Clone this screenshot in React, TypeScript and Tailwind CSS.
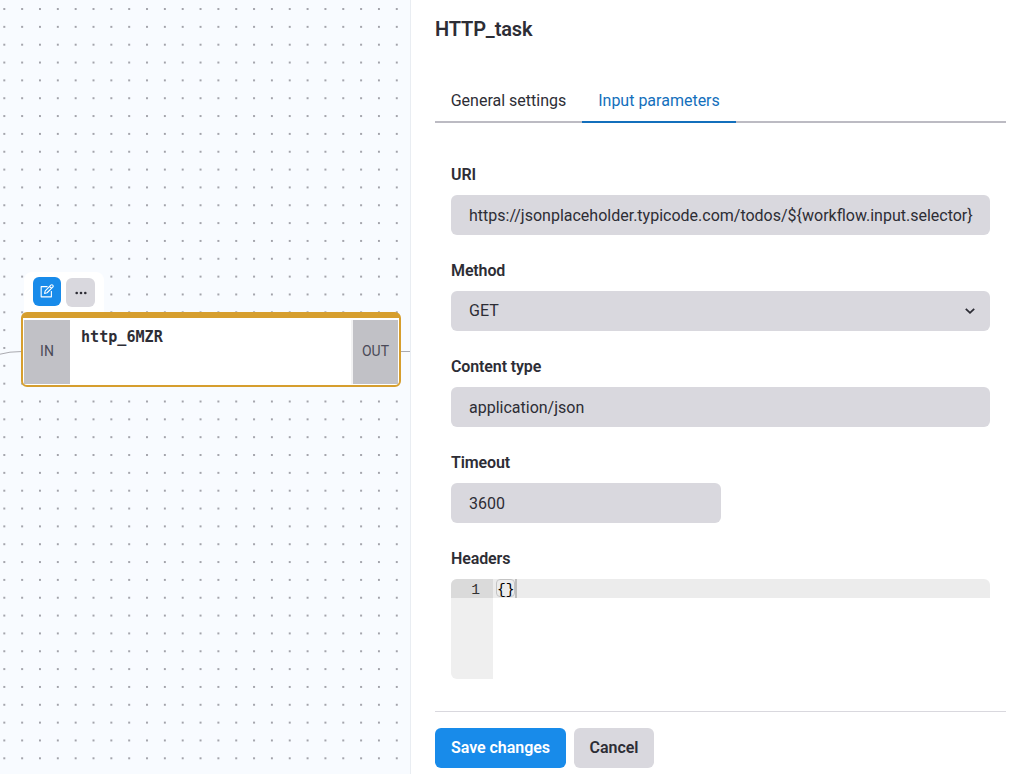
import type { ReactNode } from 'react';

function Field({ label, children }: { label: string; children: ReactNode }) {
  return (
    <div className="flex flex-col gap-2">
      <label className="block h-6 text-base leading-6 font-semibold tracking-[-0.12px]">{label}</label>
      {children}
    </div>
  );
}

function EditIcon() {
  return (
    <svg className="mb-px size-3.5" viewBox="0 0 24 24" fill="none" stroke="white" strokeWidth="1.9" strokeLinejoin="round">
      <path d="M13 4.5H2v17.5h17.5V12" />
      <path d="M18.6 2.1a2.1 2.1 0 0 1 3.2 3.2L12.2 15l-4.4 1.2L9 11.8ZM16.6 4.4l3 3" />
    </svg>
  );
}

function Canvas() {
  return (
    <main className="relative h-full w-[411px] shrink-0 overflow-hidden border-r border-[#e9edf2] bg-[#f8fbff]">
      <svg className="absolute inset-0 size-full">
        <defs>
          <pattern id="dots" x="-4.6" y="0.1" width="17.84" height="17.84" patternUnits="userSpaceOnUse">
            <circle cx="8.92" cy="8.92" r="0.95" fill="#81818a" />
          </pattern>
        </defs>
        <rect width="100%" height="100%" fill="url(#dots)" />
        <path d="M0 354.2Q9 351.5 22 351.5M401 351.5H411" fill="none" stroke="#aaaab0" />
      </svg>
      <div className="absolute top-[272px] left-6 flex h-10 w-20 gap-[5px] rounded-t-lg bg-white pt-[5px] pl-[9px]">
        <button className="flex h-[29px] w-7 items-center justify-center rounded-md bg-[#188bea]">
          <EditIcon />
        </button>
        <button className="mt-px flex h-[29px] w-[29px] items-center justify-center rounded-md bg-[#d9d8de]">
          <svg className="size-3" viewBox="0 0 12 12" fill="#2d2d35">
            <circle cx="1.7" cy="6" r="1.3" /><circle cx="6" cy="6" r="1.3" /><circle cx="10.3" cy="6" r="1.3" />
          </svg>
        </button>
      </div>
      <section className="absolute top-[312px] left-[21px] flex h-[75px] w-[380px] rounded-md border-2 border-t-[6px] border-[#d69e2e] bg-white px-px pt-[2px] pb-px text-[#4a4a57]">
        <div className="flex w-[46px] items-center justify-center bg-[#c1c1c6] pb-[2px] text-sm">IN</div>
        <div className="flex-1 border-r-2 border-[#f2f2f3] pt-[7px] pl-[11px] font-['DejaVu_Sans_Mono',monospace] text-[15.1px] leading-5 font-bold text-[#2d2d35]">http_6MZR</div>
        <div className="flex w-[45px] items-center justify-center bg-[#c1c1c6] pb-[2px] text-sm">OUT</div>
      </section>
    </main>
  );
}

export default function App() {
  return (
    <div className="flex h-[774px] w-[1024px] overflow-hidden bg-white font-[Roboto,sans-serif] text-base text-[#2d2d35]">
      <Canvas />
      <aside className="flex w-[613px] flex-col pr-[18px] pl-6">
        <h1 className="mt-[14px] h-[30px] text-xl leading-[30px] font-semibold tracking-[-0.15px]">HTTP_task</h1>
        <nav className="mt-9 flex h-[43px] border-b-2 border-[#bcbbc3]">
          <button className="h-[41px] w-[147px] text-center leading-10">General settings</button>
          <button className="h-[43px] w-[154px] border-b-2 border-[#136fbc] text-center leading-10 text-[#136fbc]">Input parameters</button>
        </nav>
        <form className="mt-10 flex h-[548px] flex-col gap-6 px-4">
          <Field label="URI">
            <div className="h-10 rounded-md bg-[#d9d8de] px-[18px] leading-[42px]">{'https://jsonplaceholder.typicode.com/todos/${workflow.input.selector}'}</div>
          </Field>
          <Field label="Method">
            <div className="flex h-10 items-center justify-between rounded-md bg-[#d9d8de] pr-[15px] pl-[18px] leading-10">
              GET
              <svg className="size-[10px]" viewBox="0 0 10 10" fill="none" stroke="#2d2d35" strokeWidth="1.8"><path d="m.8 2.8 4.2 4 4.2-4" /></svg>
            </div>
          </Field>
          <Field label="Content type">
            <div className="h-10 rounded-md bg-[#d9d8de] px-[18px] leading-[42px]">application/json</div>
          </Field>
          <Field label="Timeout">
            <div className="h-10 w-[270px] rounded-md bg-[#d9d8de] px-[18px] leading-[42px]">3600</div>
          </Field>
          <Field label="Headers">
            <div className="flex h-[100px] overflow-hidden rounded-md font-['Liberation_Mono',monospace] text-[14.67px] leading-[19px]">
              <div className="w-[42px] bg-[#efefef] text-right text-[#333333]">
                <div className="h-[19px] bg-[#dadada] pr-[13px] leading-[22px]">1</div>
              </div>
              <div className="flex h-[19px] flex-1 bg-[#ececec] pl-[3px] text-black">
                <span className="h-[18px] w-[19px] rounded-sm border border-[#c4c4c4] leading-5">{'{}'}</span>
                <span className="h-[19px] w-0.5 bg-[#bdbdbd]" />
              </div>
            </div>
          </Field>
        </form>
        <footer className="flex gap-2 border-t border-[#d9d8de] pt-4 font-semibold tracking-[-0.05px]">
          <button className="h-10 w-[131px] rounded-md bg-[#188bea] text-white">Save changes</button>
          <button className="h-10 w-20 rounded-md bg-[#d9d8de]">Cancel</button>
        </footer>
      </aside>
    </div>
  );
}
